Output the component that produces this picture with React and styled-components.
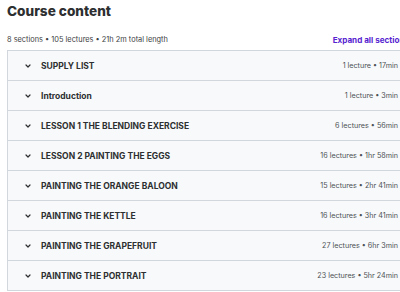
import React from "react";
import styled, { createGlobalStyle } from "styled-components";

const Global = createGlobalStyle`
  html, body { margin: 0; padding: 0; background: #fff; overflow: hidden; }
  body { font-family: Inter, "Noto Sans", sans-serif; color: #2d2f31; }
`;

const Page = styled.div`
  width: 400px;
  padding: 0 0 0 7px;
  box-sizing: content-box;
`;

const Title = styled.h2`
  margin: 0;
  padding-top: 1px;
  font-size: 13.6px;
  font-weight: 800;
  line-height: 20px;
  color: #2d2f31;
`;

const Summary = styled.div`
  display: flex;
  justify-content: space-between;
  align-items: center;
  margin-top: 12px;
  height: 13px;
  margin-bottom: 4px;
`;

const Meta = styled.span`
  font-size: 7.4px;
  color: #3e4143;
`;

const Expand = styled.span`
  font-size: 8.1px;
  font-weight: 700;
  color: #5624d0;
  white-space: nowrap;
  margin-right: -2px;
`;

const List = styled.div`
  border: 1px solid #d1d7dc;
  border-right: none;
`;

const Row = styled.div`
  display: flex;
  align-items: center;
  height: 29px;
  padding: 0 9px 0 16px;
  background: #f7f9fa;
  border-top: 1px solid #d1d7dc;
  &:first-child { border-top: none; }
`;

const Chevron = styled.svg`
  width: 8px;
  height: 8px;
  margin-right: 9px;
  flex: none;
`;

const SectionTitle = styled.span`
  flex: 1;
  font-size: 8.5px;
  font-weight: 700;
  color: #2d2f31;
`;

const SectionMeta = styled.span`
  font-size: 7.2px;
  color: #4d5155;
`;

const sections = [
  ["SUPPLY LIST", "1 lecture • 17min"],
  ["Introduction", "1 lecture • 3min"],
  ["LESSON 1 THE BLENDING EXERCISE", "6 lectures • 56min"],
  ["LESSON 2 PAINTING THE EGGS", "16 lectures • 1hr 58min"],
  ["PAINTING THE ORANGE BALOON", "15 lectures • 2hr 41min"],
  ["PAINTING THE KETTLE", "16 lectures • 3hr 41min"],
  ["PAINTING THE GRAPEFRUIT", "27 lectures • 6hr 3min"],
  ["PAINTING THE PORTRAIT", "23 lectures • 5hr 24min"],
];

export default function App() {
  return (
    <Page>
      <Global />
      <Title>Course content</Title>
      <Summary>
        <Meta>8 sections • 105 lectures • 21h 2m total length</Meta>
        <Expand>Expand all sections</Expand>
      </Summary>
      <List>
        {sections.map(([t, m]) => (
          <Row key={t}>
            <Chevron viewBox="0 0 8 8">
              <path d="M2 3 L4 5 L6 3" fill="none" stroke="#2d2f31" strokeWidth="1.2" strokeLinecap="round" strokeLinejoin="round" />
            </Chevron>
            <SectionTitle>{t}</SectionTitle>
            <SectionMeta>{m}</SectionMeta>
          </Row>
        ))}
      </List>
    </Page>
  );
}
